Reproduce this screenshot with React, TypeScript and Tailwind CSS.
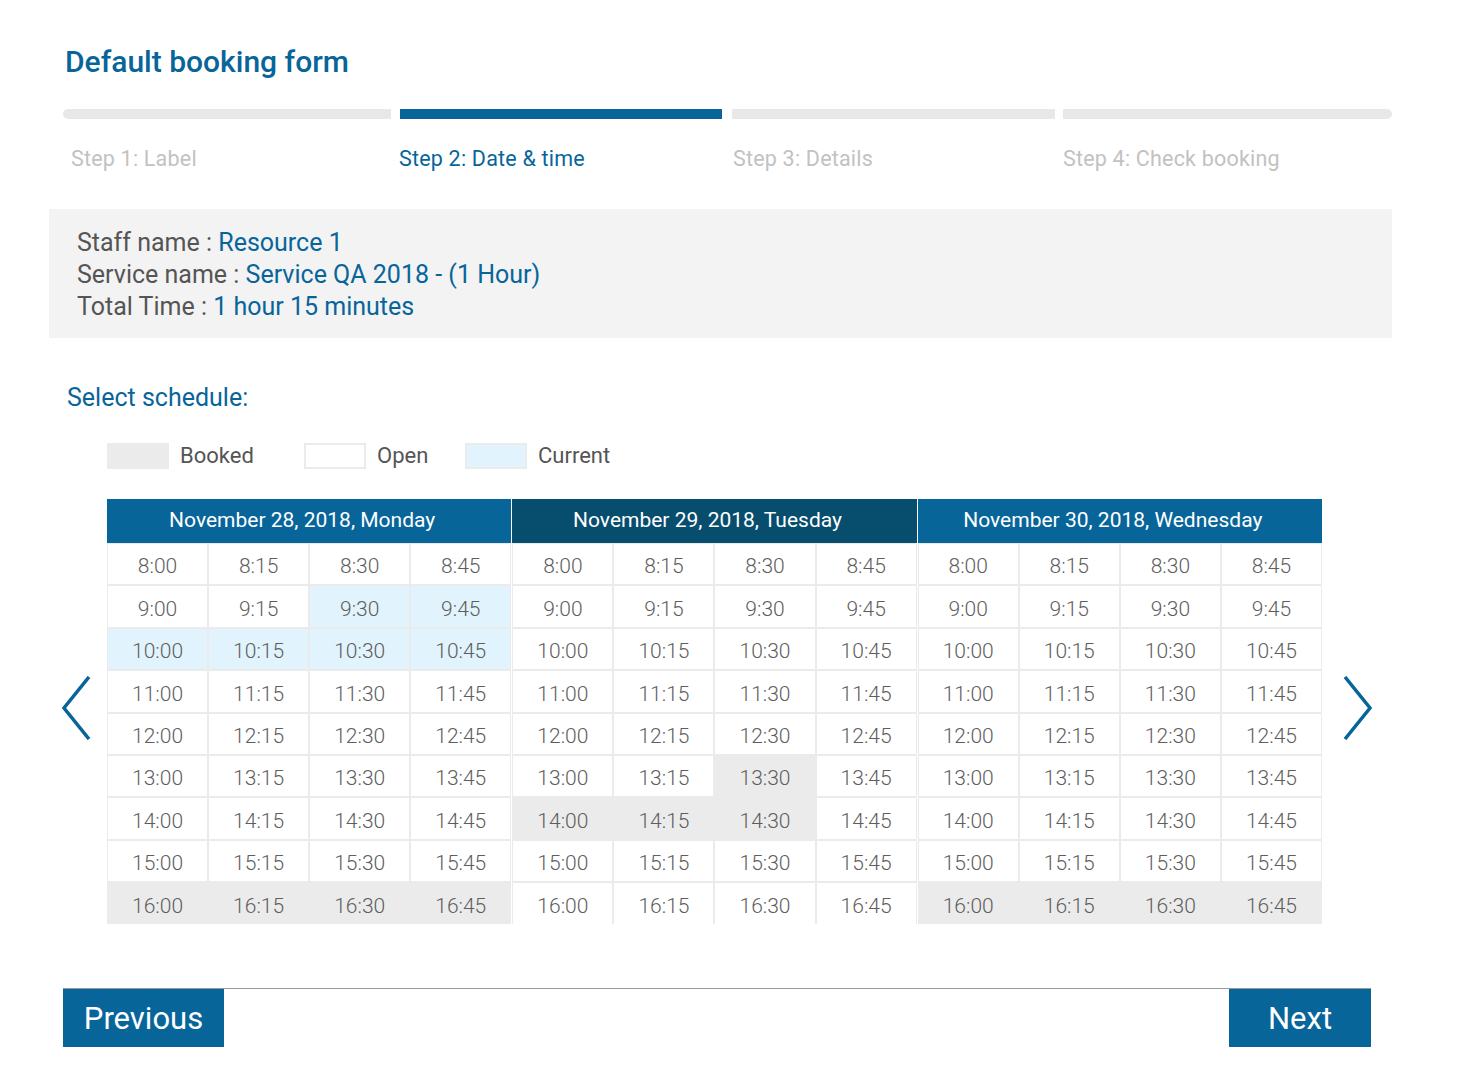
const days = [
  { label: "November 28, 2018, Monday", dark: false },
  { label: "November 29, 2018, Tuesday", dark: true },
  { label: "November 30, 2018, Wednesday", dark: false },
]

const hours = [8, 9, 10, 11, 12, 13, 14, 15, 16]
const mins = ["00", "15", "30", "45"]

// booked / current slots per day
const booked: Record<number, string[]> = {
  0: ["16:00", "16:15", "16:30", "16:45"],
  1: ["13:30", "14:00", "14:15", "14:30"],
  2: ["16:00", "16:15", "16:30", "16:45"],
}
const current: Record<number, string[]> = {
  0: ["9:30", "9:45", "10:00", "10:15", "10:30", "10:45"],
  1: [],
  2: [],
}

function DayColumn({ index, label, dark }: { index: number; label: string; dark: boolean }) {
  return (
    <div className="flex-1 flex flex-col">
      <div
        className={`h-[44px] pr-[14px] flex items-center justify-center text-white text-[21px] ${
          dark ? "bg-[#064d6e]" : "bg-[#07659a]"
        }`}
      >
        {label}
      </div>
      <div className="grid grid-cols-4 gap-[2px] bg-[#ebebeb] px-[1px] pt-[1px]">
        {hours.map((h) =>
          mins.map((m) => {
            const t = `${h}:${m}`
            let bg = "bg-white"
            if (booked[index].includes(t)) bg = "bg-[#ebebeb]"
            if (current[index].includes(t)) bg = "bg-[#e1f3fc]"
            return (
              <div
                key={t}
                className={`h-[40.4px] pt-[6px] flex items-center justify-center text-[21px] font-light text-[#5e5e5e] ${bg}`}
              >
                {t}
              </div>
            )
          })
        )}
      </div>
    </div>
  )
}

export default function App() {
  return (
    <div className="min-h-screen bg-white font-['Roboto',sans-serif]">
      <div className="w-[1343px] ml-[49px] pt-[44px]">
        <h1 className="ml-[16px] text-[30px] leading-[36px] font-medium text-[#07659a]">
          Default booking form
        </h1>

        {/* progress */}
        <div className="ml-[14px] mt-[29px] flex">
          <div className="w-[328px] h-[10px] bg-[#e8e8e8] rounded-l-full" />
          <div className="ml-[9px] w-[323px] h-[10px] bg-[#07659a]" />
          <div className="ml-[10px] w-[323px] h-[10px] bg-[#e8e8e8]" />
          <div className="ml-[8px] w-[330px] h-[10px] bg-[#e8e8e8] rounded-r-full" />
        </div>
        <div className="ml-[14px] mt-[26px] flex text-[21.5px] leading-[28px] tracking-[0.2px] text-[#c2c2c2]">
          <div className="w-[336px] pl-[8px]">Step 1: Label</div>
          <div className="w-[334px] text-[#07659a]">Step 2: Date &amp; time</div>
          <div className="w-[330px]">Step 3: Details</div>
          <div>Step 4: Check booking</div>
        </div>

        {/* info */}
        <div className="mt-[36px] bg-[#f3f3f3] pl-[28px] pt-[18px] pb-[15px] text-[25px] leading-[32px] text-[#555]">
          <div>
            Staff name : <span className="text-[#07659a]">Resource 1</span>
          </div>
          <div>
            Service name : <span className="text-[#07659a]">Service QA 2018 - (1 Hour)</span>
          </div>
          <div>
            Total Time : <span className="text-[#07659a]">1 hour 15 minutes</span>
          </div>
        </div>

        <div className="mt-[44px] ml-[18px] text-[25px] leading-[32px] text-[#07659a]">Select schedule:</div>

        {/* legend */}
        <div className="mt-[25px] ml-[58px] flex items-center text-[22px] text-[#555]">
          <div className="w-[197px] flex items-center">
            <div className="w-[62px] h-[26px] bg-[#ebebeb]" />
            <span className="ml-[11px]">Booked</span>
          </div>
          <div className="w-[161px] flex items-center">
            <div className="w-[62px] h-[26px] bg-white border-2 border-[#ebebeb]" />
            <span className="ml-[11px]">Open</span>
          </div>
          <div className="flex items-center">
            <div className="w-[62px] h-[26px] bg-[#e1f3fc] border-2 border-[#ebebeb]" />
            <span className="ml-[11px]">Current</span>
          </div>
        </div>

        {/* schedule */}
        <div className="mt-[27px] flex items-start">
          <div className="w-[58px] pl-[12px] mt-[177px]">
            <svg width="30" height="64" viewBox="0 0 30 64" fill="none">
              <polyline points="28,1 3,32 28,63" stroke="#07659a" strokeWidth="3.5" />
            </svg>
          </div>
          <div className="w-[1215px] flex gap-[1px]">
            {days.map((d, i) => (
              <DayColumn key={d.label} index={i} label={d.label} dark={d.dark} />
            ))}
          </div>
          <div className="ml-[21px] mt-[177px]">
            <svg width="30" height="64" viewBox="0 0 30 64" fill="none">
              <polyline points="2,1 27,32 2,63" stroke="#07659a" strokeWidth="3.5" />
            </svg>
          </div>
        </div>

        {/* footer */}
        <div className="mt-[64px] ml-[14px] w-[1308px] border-t border-[#999] flex justify-between">
          <button className="w-[161px] h-[58px] pt-[4px] bg-[#07659a] text-white text-[31px]">Previous</button>
          <button className="w-[142px] h-[58px] pt-[4px] bg-[#07659a] text-white text-[31px]">Next</button>
        </div>
      </div>
    </div>
  )
}
